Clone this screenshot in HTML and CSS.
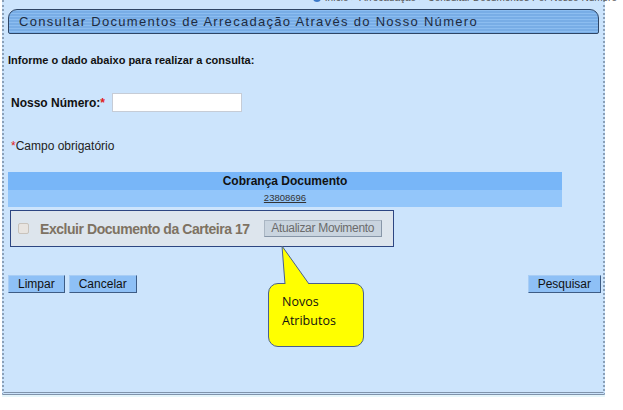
FILE: index.html
```html
<!DOCTYPE html>
<html lang="pt">
<head>
<meta charset="utf-8">
<link rel="stylesheet" href="styles.css">
</head>
<body>
<div class="crumb"><span class="dot"></span><span>Início &gt; Arrecadação &gt; Consultar Documentos Por Nosso Número</span></div>
<div class="panel">
  <div class="titlebar">Consultar Documentos de Arrecadação Através do Nosso Número</div>
  <p class="intro">Informe o dado abaixo para realizar a consulta:</p>
  <div class="field">
    <label class="lbl">Nosso Número:<span class="req">*</span></label>
    <input class="inp" type="text">
  </div>
  <p class="note"><span class="req">*</span>Campo obrigatório</p>
  <div class="tbl">
    <div class="th">Cobrança Documento</div>
    <div class="td"><a href="#">23808696</a></div>
  </div>
  <div class="newbox">
    <span class="chk"></span>
    <span class="chklbl">Excluir Documento da Carteira 17</span>
    <span class="dbtn">Atualizar Movimento</span>
  </div>
  <div class="actions">
    <div class="left">
      <button class="btn">Limpar</button>
      <button class="btn">Cancelar</button>
    </div>
    <button class="btn">Pesquisar</button>
  </div>
  <div class="callout">
    <svg class="tail" width="34" height="40" viewBox="0 0 34 40">
      <path d="M4 39 L1 1 L28 39" fill="#ffff00" stroke="#4a5f8f" stroke-width="1"/>
    </svg>
    <div class="bubble">Novos<br>Atributos</div>
  </div>
</div>
<div class="under"></div>
</body>
</html>
```

FILE: styles.css
```css
html, body { margin: 0; padding: 0; background: #ffffff; }
body { width: 623px; height: 410px; overflow: hidden; font-family: "Liberation Sans", Arial, sans-serif; position: relative; }

.crumb { position: absolute; top: -8px; right: 0; font-size: 10px; color: #555; white-space: nowrap; z-index: 2; display: flex; align-items: center; gap: 4px; padding-right: 6px; }
.dot { width: 8px; height: 8px; border-radius: 50%; background: #3a78c8; }

.panel {
  position: relative;
  margin-left: 2px;
  width: 599px;
  height: 392px;
  background: #cce4fc;
  border-left: 2px dotted #8aa0b8;
  border-right: 2px dotted #8aa0b8;
  border-bottom: 3px double #7f93ab;
  display: flex;
  flex-direction: column;
}

.titlebar {
  margin: 9px 4px 0 4px;
  height: 23px;
  border: 1px solid #2e4565;
  border-radius: 9px 9px 2px 2px;
  background: repeating-linear-gradient(to bottom, #8cbdf0 0 1px, #78ade6 1px 3px);
  font-family: "Liberation Sans", Arial, sans-serif;
  font-size: 13px;
  letter-spacing: 1.3px;
  color: #1e2b40;
  line-height: 23px;
  padding-left: 10px;
}

.intro { margin: 20px 0 0 4px; font-size: 11px; font-weight: bold; color: #111; }

.field { display: flex; align-items: center; margin: 27px 0 0 7px; }
.lbl { font-size: 12px; font-weight: bold; color: #111; width: 101px; }
.req { color: #e02020; }
.inp { width: 126px; height: 15px; border: 1px solid #c6ccd6; background: #fff; padding: 1px; margin: 0; }

.note { margin: 27px 0 0 7px; font-size: 12px; color: #222; }

.tbl { margin: 19px 0 0 4px; width: 554px; }
.th { background: #78b6f8; height: 18px; line-height: 19px; text-align: center; font-size: 12px; font-weight: bold; color: #111; }
.td { background: #93c6fa; height: 17px; line-height: 16px; text-align: center; font-size: 9.5px; }
.td a { color: #333; text-decoration: underline; }

.newbox {
  margin: 3px 0 0 6px;
  width: 384px;
  height: 37px;
  background: #dde5ed;
  border: 1px solid #2d4682;
  display: flex;
  align-items: center;
  box-sizing: border-box;
  padding-left: 7px;
}
.chk { width: 9px; height: 9px; border: 1px solid #c9c3bc; border-radius: 2px; background: #e8e4e0; }
.chklbl { margin-left: 11px; font-size: 14px; font-weight: bold; color: #7e7262; letter-spacing: -0.45px; }
.dbtn {
  margin-left: 14px;
  width: 118px; height: 17px; box-sizing: border-box;
  background: #c9d4df;
  border: 1px solid #aab6c3; border-right-color: #8796a8; border-bottom-color: #8796a8;
  font-size: 12px; color: #6b6b6b; text-align: center; line-height: 15px; letter-spacing: -0.3px;
}

.actions { display: flex; justify-content: space-between; margin: 28px 2px 0 4px; }
.left { display: flex; gap: 4px; }
.btn {
  margin: 0; padding: 0 9px;
  height: 18px;
  background: #8ec0f6;
  border: 1px solid #a8cdf5; border-right-color: #3d5c85; border-bottom-color: #3d5c85;
  font-family: "Liberation Sans", Arial, sans-serif;
  font-size: 12px; color: #111; line-height: 15px;
}

.callout { position: absolute; left: 262px; top: 245px; width: 100px; height: 104px; }
.tail { position: absolute; left: 15px; top: 0; z-index: 2; }
.bubble {
  position: absolute; left: 2px; top: 38px;
  width: 96px; height: 64px; box-sizing: border-box;
  background: #ffff00;
  border: 1px solid #4a5f8f;
  border-radius: 10px;
  font-family: "Open Sans", "Liberation Sans", sans-serif;
  font-size: 12.5px; color: #111; line-height: 19px;
  padding: 8px 0 0 13px;
}

.under { margin-left: 2px; width: 603px; height: 2px; background: #e6f6fb; }
```
